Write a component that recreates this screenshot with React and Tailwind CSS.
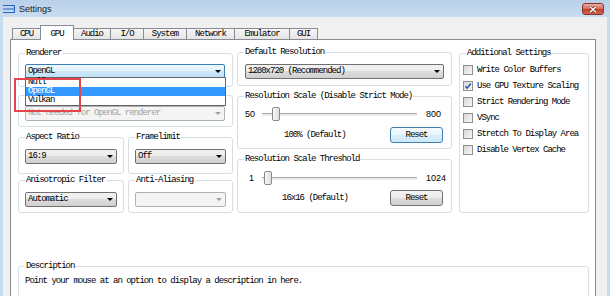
import React from "react";

const txt =
  "font-['Liberation_Mono',monospace] text-[9px] leading-none tracking-[-1px] whitespace-nowrap";
const sans =
  "font-['Liberation_Sans',Arial,sans-serif] text-[9px] leading-none whitespace-nowrap";

const tabs = [
  { name: "CPU", w: "w-[29px]" },
  { name: "GPU", w: "w-[34px]", active: true },
  { name: "Audio", w: "w-[38px]" },
  { name: "I/O", w: "w-[34px]" },
  { name: "System", w: "w-[44px]" },
  { name: "Network", w: "w-[49px]" },
  { name: "Emulator", w: "w-[56px]" },
  { name: "GUI", w: "w-[29px]" },
];

const checks = [
  { label: "Write Color Buffers" },
  { label: "Use GPU Texture Scaling", checked: true },
  { label: "Strict Rendering Mode" },
  { label: "VSync" },
  { label: "Stretch To Display Area" },
  { label: "Disable Vertex Cache" },
];

const Group = ({ label, className, children }) => (
  <div className={`relative shrink-0 rounded-[3px] border border-[#d5dfe5] ${className}`}>
    {label && (
      <span className={`absolute -top-[5px] left-[6px] bg-white px-[1px] text-black ${txt}`}>
        {label}
      </span>
    )}
    {children}
  </div>
);

const Arrow = ({ disabled }) => (
  <svg width="6" height="3" viewBox="0 0 6 3" className="shrink-0">
    <path d="M0 0h6L3 3z" fill={disabled ? "#a0a0a0" : "#000"} />
  </svg>
);

const Combo = ({ text = "", w, variant = "normal" }) => {
  const box = {
    normal:
      "border-[#707070] bg-[linear-gradient(#f2f2f2_0%,#ebebeb_50%,#dddddd_50%,#cfcfcf_100%)]",
    open: "border-[#3c7fb1] bg-[linear-gradient(#eef8fe_0%,#dff1fc_50%,#cde8f9_50%,#bfe0f6_100%)]",
    disabled: "border-[#adb2b5] bg-[#f4f4f4]",
  }[variant];
  return (
    <div
      className={`flex h-[15px] shrink-0 items-center justify-between rounded-[2px] border pl-[2px] pr-[3px] ${box} ${w}`}
    >
      <span className={`${txt} ${variant === "disabled" ? "text-[#a3a3a3]" : "text-black"}`}>
        {text}
      </span>
      <Arrow disabled={variant === "disabled"} />
    </div>
  );
};

const Slider = ({ thumb }) => (
  <div className="relative flex h-[16px] w-[155px] items-center">
    <div className="h-[3px] w-full border-t border-[#a9a9a9] bg-[#e9ecec]" />
    <div
      className={`absolute top-[1px] h-[14px] w-[8px] rounded-[2px] border border-[#8a8a8a] bg-[linear-gradient(90deg,#f7f7f7,#dedede)] ${thumb}`}
    />
  </div>
);

const Button = ({ focused }) => (
  <div
    className={`flex h-[16px] w-[53px] items-center justify-center rounded-[3px] border ${
      focused
        ? "border-[#3c7fb1] bg-[linear-gradient(#f4fafe_0%,#e8f5fc_50%,#d9eefb_50%,#cde7f8_100%)]"
        : "border-[#707070] bg-[linear-gradient(#f2f2f2_0%,#ebebeb_50%,#dddddd_50%,#cfcfcf_100%)]"
    }`}
  >
    <span className={`${txt} text-black`}>Reset</span>
  </div>
);

const Check = ({ label, checked }) => (
  <div className="flex h-[16px] items-center gap-[4px]">
    <div className="flex h-[10px] w-[10px] items-center justify-center border border-[#8f8f8f] bg-[linear-gradient(135deg,#d8d8d8,#f7f7f7)]">
      {checked && (
        <svg width="8" height="8" viewBox="0 0 8 8">
          <path d="M1.5 4.2 3.2 6.2 6.8 1.5" fill="none" stroke="#1f4ea6" strokeWidth="1.4" />
        </svg>
      )}
    </div>
    <span className={`${txt} text-black`}>{label}</span>
  </div>
);

const App = () => {
  return (
    <div className="relative flex h-[296px] w-[610px] flex-col overflow-hidden bg-[#c6daf0]">
      {/* title bar */}
      <div className="flex h-[17px] shrink-0 items-start bg-[linear-gradient(#b9d0ea,#c8dbf0)] pl-[3px] pr-[6px]">
        <svg width="12" height="8" viewBox="0 0 12 8" className="mt-[5px]">
          <path d="M0 0.5h11.5v7H0M0 4h11.5" fill="none" stroke="#2868c0" strokeWidth="1.2" />
        </svg>
        <span className={`${sans} ml-[4px] mt-[5px] text-[#1a1a1a]`}>Settings</span>
        <div className="ml-auto mt-[3px] flex h-[12px] w-[22px] items-center justify-center rounded-[3px] border border-[#8a3128] bg-[linear-gradient(#eab0a6_0%,#d66f5f_45%,#c4402f_55%,#cf6553_100%)]">
          <svg width="10" height="7" viewBox="0 0 10 7">
            <path d="M2 0.8 8 6.2M8 0.8 2 6.2" stroke="#6b2018" strokeWidth="2.6" />
            <path d="M2 0.8 8 6.2M8 0.8 2 6.2" stroke="#fff" strokeWidth="1.5" />
          </svg>
        </div>
      </div>

      {/* client */}
      <div className="mx-[3px] flex flex-1 flex-col bg-[#f0f0f0] pl-[7px] pr-[11px] pt-[8px]">
        <div className="ml-[2px] flex items-end">
          {tabs.map((t, i) =>
            t.active ? (
              <div
                key={t.name}
                className={`relative z-10 -mb-px flex h-[15px] items-center justify-center border border-b-0 border-[#898c95] bg-white pb-[1px] pt-[3px] ${t.w} ${i ? "-ml-px" : ""}`}
              >
                <span className={`${txt} text-black`}>{t.name}</span>
              </div>
            ) : (
              <div
                key={t.name}
                className={`flex h-[11px] items-center justify-center border border-b-0 border-[#898c95] bg-[linear-gradient(#f6f6f6,#e4e4e4)] ${t.w} ${i ? "-ml-px" : ""}`}
              >
                <span className={`${txt} text-black`}>{t.name}</span>
              </div>
            )
          )}
        </div>

        <div className="h-[270px] w-[586px] shrink-0 border border-[#898c95] bg-white pl-[7px] pt-[12px]">
          <div className="flex items-start">
            {/* left column */}
            <div className="mt-[1px] flex w-[215px] flex-col">
              <Group label="Renderer" className="h-[34px] pl-[6px] pt-[10px]">
                <div className="relative">
                  <Combo text="OpenGL" w="w-[200px]" variant="open" />
                  <div className="absolute left-0 top-[13px] z-20 w-[201px] border border-[#646464] bg-white">
                    <div className={`flex h-[9px] items-center pl-[2px] text-black ${txt}`}>Null</div>
                    <div className={`flex h-[9px] items-center bg-[#3399ff] pl-[2px] text-white ${txt}`}>
                      OpenGL
                    </div>
                    <div className={`flex h-[9px] items-center pl-[2px] text-black ${txt}`}>Vulkan</div>
                  </div>
                </div>
              </Group>
              <Group className="mt-[8px] h-[32px] pl-[6px] pt-[10px]">
                <Combo text="Not needed for OpenGL renderer" w="w-[200px]" variant="disabled" />
              </Group>
              <div className="mt-[10px] flex">
                <Group label="Aspect Ratio" className="h-[37px] w-[106px] pl-[6px] pt-[11px]">
                  <Combo text="16:9" w="w-[92px]" />
                </Group>
                <Group label="Framelimit" className="ml-[4px] h-[37px] w-[105px] pl-[6px] pt-[11px]">
                  <Combo text="Off" w="w-[91px]" />
                </Group>
              </div>
              <div className="mt-[6px] flex">
                <Group label="Anisotropic Filter" className="h-[33px] w-[106px] pl-[6px] pt-[11px]">
                  <Combo text="Automatic" w="w-[92px]" />
                </Group>
                <Group label="Anti-Aliasing" className="ml-[4px] h-[33px] w-[105px] pl-[6px] pt-[11px]">
                  <Combo w="w-[91px]" variant="disabled" />
                </Group>
              </div>
            </div>

            {/* middle column */}
            <div className="ml-[4px] flex w-[215px] flex-col">
              <Group label="Default Resolution" className="h-[34px] pl-[7px] pt-[11px]">
                <Combo text="1280x720 (Recommended)" w="w-[199px]" />
              </Group>
              <Group
                label="Resolution Scale (Disable Strict Mode)"
                className="mt-[10px] flex h-[53px] flex-col pl-[7px] pt-[9px]"
              >
                <div className="flex items-center">
                  <span className={`${sans} w-[17px] text-black`}>50</span>
                  <Slider thumb="left-[10px]" />
                  <span className={`${sans} ml-[9px] text-black`}>800</span>
                </div>
                <div className="mt-[5px] flex items-center pl-[39px]">
                  <span className={`${txt} w-[106px] text-black`}>100% (Default)</span>
                  <Button focused />
                </div>
              </Group>
              <Group
                label="Resolution Scale Threshold"
                className="mt-[10px] flex h-[54px] flex-col pl-[7px] pt-[10px]"
              >
                <div className="flex items-center">
                  <span className={`${sans} w-[17px] pl-[4px] text-black`}>1</span>
                  <Slider thumb="left-[2px]" />
                  <span className={`${sans} ml-[9px] text-black`}>1024</span>
                </div>
                <div className="mt-[4px] flex items-center pl-[37px]">
                  <span className={`${txt} w-[108px] text-black`}>16x16 (Default)</span>
                  <Button />
                </div>
              </Group>
            </div>

            {/* right column */}
            <Group label="Additional Settings" className="ml-[7px] mt-[1px] h-[160px] w-[130px] pl-[3px] pt-[8px]">
              {checks.map((c) => (
                <Check key={c.label} label={c.label} checked={c.checked} />
              ))}
            </Group>
          </div>

          <Group label="Description" className="mt-[53px] h-[40px] w-[571px] pl-[6px] pt-[10px]">
            <div className={`${txt} flex h-[9px] items-center text-black`}>
              Point your mouse at an option to display a description in here.
            </div>
          </Group>
        </div>
      </div>

      {/* annotation */}
      <div className="absolute left-[14px] top-[78px] z-30 h-[34px] w-[67px] border-2 border-[#e4454a]" />
    </div>
  );
};

export default App;
